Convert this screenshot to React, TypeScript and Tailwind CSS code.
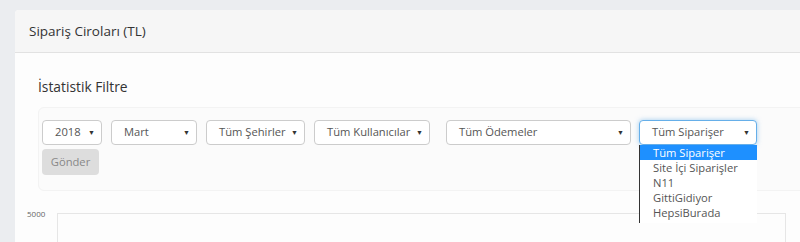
import React from 'react'

const font = { fontFamily: '"Open Sans", "Liberation Sans", sans-serif' }

const filters = [
  { label: '2018', w: 'w-[60px]', ml: 'ml-0' },
  { label: 'Mart', w: 'w-[86px]', ml: 'ml-[9px]' },
  { label: 'Tüm Şehirler', w: 'w-[99px]', ml: 'ml-[9px]' },
  { label: 'Tüm Kullanıcılar', w: 'w-[116px]', ml: 'ml-[9px]' },
  { label: 'Tüm Ödemeler', w: 'w-[185px]', ml: 'ml-[16px]' },
]

const options = ['Tüm Siparişer', 'Site İçi Siparişler', 'N11', 'GittiGidiyor', 'HepsiBurada']

const Arrow = () => <span className="text-[7px] leading-none text-[#333]">▼</span>

const App = () => {
  return (
    <div style={font} className="w-[800px] h-[242px] overflow-hidden bg-[#ebedf0] pt-[10px] pl-[15px]">
      <div className="w-[800px] h-[240px] bg-[#fdfdfd] rounded-tl-[4px]">
        {/* Panel header */}
        <div className="h-[43px] bg-[#f6f6f6] border-b border-[#e2e2e2] rounded-tl-[4px] flex items-center pl-[14px] text-[13.5px] text-[#333]">
          Sipariş Ciroları (TL)
        </div>

        <div className="pl-[23px] pt-[23px]">
          <div className="text-[13.8px] leading-[22px] text-[#333]">İstatistik Filtre</div>

          {/* Filter well */}
          <div className="mt-[9px] w-[780px] bg-[#fbfbfb] border border-[#f3f3f3] rounded-[6px] pl-[3px] pt-[12px] pb-[15px]">
            <div className="flex items-center">
              {filters.map((f) => (
                <div
                  key={f.label}
                  className={`${f.w} ${f.ml} h-[25px] bg-white border border-[#ccc] rounded-[4px] flex items-center justify-between pl-[12px] pr-[6px] text-[11.2px] text-[#555]`}
                >
                  <span className="whitespace-nowrap">{f.label}</span>
                  <Arrow />
                </div>
              ))}

              <div className="relative ml-[8px]">
                <div className="w-[118px] h-[25px] bg-white border border-[#66afe9] rounded-[4px] shadow-[0_0_5px_rgba(102,175,233,0.6)] flex items-center justify-between pl-[12px] pr-[6px] text-[11.2px] text-[#555]">
                  <span className="whitespace-nowrap">Tüm Siparişer</span>
                  <Arrow />
                </div>
                <div className="absolute left-0 top-[25px] w-[118px] h-[78px] overflow-hidden bg-white border-l border-[#333] z-10">
                  {options.map((o, i) => (
                    <div
                      key={o}
                      className={`h-[15px] leading-[15px] pl-[13px] text-[11.2px] whitespace-nowrap ${
                        i === 0 ? 'bg-[#1e90ff] text-white' : 'text-[#555]'
                      }`}
                    >
                      {o}
                    </div>
                  ))}
                </div>
              </div>
            </div>

            <button className="mt-[4px] w-[57px] h-[26px] bg-[#dddddd] rounded-[4px] text-[11.2px] text-[#888]">
              Gönder
            </button>
          </div>
        </div>

        {/* Chart */}
        <div className="flex pl-[12px] mt-[22px]">
          <div className="w-[30px] text-[8px] leading-[12px] text-[#666] -mt-[5px]">5000</div>
          <div className="w-[729px] h-[40px] border-t border-l border-r border-[#e6e6e6]" />
        </div>
      </div>
    </div>
  )
}

export default App
